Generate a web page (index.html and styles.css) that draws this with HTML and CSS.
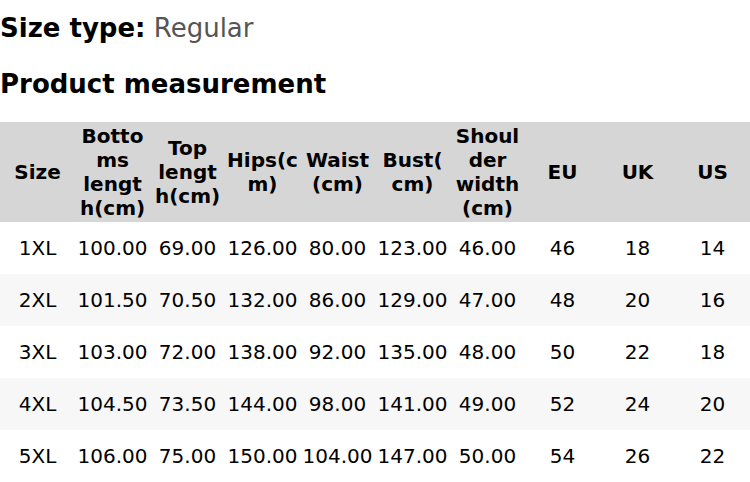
FILE: index.html
```html
<!DOCTYPE html>
<html>
<head>
<meta charset="utf-8">
<link rel="stylesheet" href="styles.css">
</head>
<body>
<div class="size-type"><span class="label">Size type:</span> <span class="value">Regular</span></div>
<h2 class="heading">Product measurement</h2>
<table class="chart">
  <thead>
    <tr>
      <th>Size</th><th>Bottoms length(cm)</th><th>Top length(cm)</th><th>Hips(cm)</th><th>Waist (cm)</th><th>Bust(cm)</th><th>Shoulder width (cm)</th><th>EU</th><th>UK</th><th>US</th>
    </tr>
  </thead>
  <tbody>
    <tr><td>1XL</td><td>100.00</td><td>69.00</td><td>126.00</td><td>80.00</td><td>123.00</td><td>46.00</td><td>46</td><td>18</td><td>14</td></tr>
    <tr><td>2XL</td><td>101.50</td><td>70.50</td><td>132.00</td><td>86.00</td><td>129.00</td><td>47.00</td><td>48</td><td>20</td><td>16</td></tr>
    <tr><td>3XL</td><td>103.00</td><td>72.00</td><td>138.00</td><td>92.00</td><td>135.00</td><td>48.00</td><td>50</td><td>22</td><td>18</td></tr>
    <tr><td>4XL</td><td>104.50</td><td>73.50</td><td>144.00</td><td>98.00</td><td>141.00</td><td>49.00</td><td>52</td><td>24</td><td>20</td></tr>
    <tr><td>5XL</td><td>106.00</td><td>75.00</td><td>150.00</td><td>104.00</td><td>147.00</td><td>50.00</td><td>54</td><td>26</td><td>22</td></tr>
  </tbody>
</table>
</body>
</html>
```
FILE: styles.css
```css
html, body {
  margin: 0;
  padding: 0;
  background: #fff;
  font-family: "DejaVu Sans", sans-serif;
  color: #000;
}
.size-type {
  font-size: 26px;
  line-height: 56px;
  height: 56px;
}
.size-type .label {
  font-weight: bold;
}
.size-type .value {
  color: #555;
}
.heading {
  margin: 0 0 10px 0;
  font-size: 26px;
  line-height: 56px;
  height: 56px;
  font-weight: bold;
}
.chart {
  width: 750px;
  border-collapse: collapse;
  table-layout: fixed;
  font-size: 20px;
  line-height: 24px;
}
.chart th {
  background: #d6d6d6;
  font-weight: bold;
  padding: 2px 2px;
  text-align: center;
  vertical-align: middle;
  overflow-wrap: anywhere;
}
.chart td {
  padding: 14px 2px;
  text-align: center;
  white-space: nowrap;
}
.chart tbody tr:nth-child(even) {
  background: #f7f7f7;
}
```
